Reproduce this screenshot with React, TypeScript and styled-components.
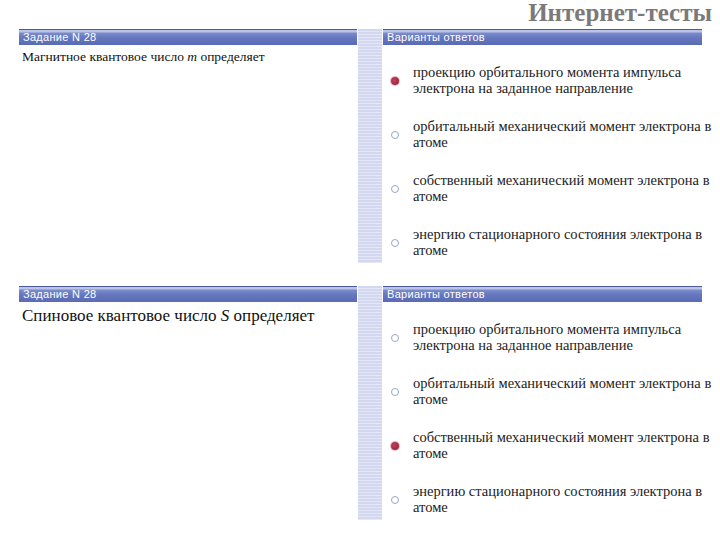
import React from "react";
import styled, { createGlobalStyle } from "styled-components";

const Global = createGlobalStyle`
  html, body { margin: 0; padding: 0; background: #fff; }
  body { width: 720px; height: 540px; overflow: hidden; }
`;

const Page = styled.div`
  width: 720px;
  height: 540px;
  display: flex;
  flex-direction: column;
`;

const TitleRow = styled.div`
  height: 28px;
  display: flex;
  justify-content: flex-end;
  align-items: flex-start;
  padding-right: 8px;
`;

const Title = styled.h1`
  margin: 0;
  font-family: "Liberation Serif", "DejaVu Serif", serif;
  font-weight: bold;
  font-size: 25px;
  line-height: 26px;
  color: #7a7a7a;
`;

const Section = styled.section<{ $gap: number }>`
  display: grid;
  grid-template-columns: 338px 24px 319px;
  column-gap: 1px;
  margin-left: 19px;
  margin-top: ${(p) => p.$gap}px;
`;

const Header = styled.div`
  height: 16px;
  box-sizing: border-box;
  border-top: 1px solid #4a5a9c;
  background: linear-gradient(
    to bottom,
    #b9c4e6 0px,
    #b9c4e6 2px,
    #7b8bcb 3px,
    #6476bd 8px,
    #5a6bb5 15px
  );
  color: #fff;
  font-family: "Liberation Sans", Arial, sans-serif;
  font-size: 11px;
  letter-spacing: 0.3px;
  line-height: 14px;
  padding-left: 4px;
  white-space: nowrap;
  overflow: hidden;
`;

const Column = styled.div`
  display: flex;
  flex-direction: column;
  min-width: 0;
`;

const Stripe = styled.div`
  background: repeating-linear-gradient(
    to bottom,
    #d3d8f0 0px,
    #d3d8f0 2px,
    #e4e7f6 2px,
    #e4e7f6 3px
  );
`;

const Question = styled.div<{ $size: number }>`
  font-family: "Liberation Serif", "Times New Roman", serif;
  font-size: ${(p) => p.$size}px;
  color: #111;
  padding: 4px 0 0 3px;
  line-height: 1.2;
`;

const Var = styled.i`
  font-family: "Liberation Serif", serif;
`;

const Options = styled.div`
  display: flex;
  flex-direction: column;
  gap: 22px;
  padding: 19px 0 5px 8px;
`;

const Option = styled.div`
  display: flex;
  align-items: center;
  gap: 14px;
`;

const Radio = styled.span<{ $checked: boolean }>`
  flex: none;
  width: 8px;
  height: 8px;
  border-radius: 50%;
  margin-top: 2px;
  box-sizing: border-box;
  ${(p) =>
    p.$checked
      ? `background: radial-gradient(circle at 40% 40%, #c2405a, #8e1a34); box-shadow: 0 0 0 1px #e9b8c2;`
      : `border: 1.5px solid #9aa6c4; background: #fff;`}
`;

const OptionText = styled.div`
  flex: none;
  font-family: "Liberation Serif", "Times New Roman", serif;
  font-size: 14.5px;
  line-height: 16px;
  color: #222;
  width: 306px;
`;

type Q = { text: React.ReactNode; size: number; checked: number; gap: number };

const options = [
  "проекцию орбитального момента импульса электрона на заданное направление",
  "орбитальный механический момент электрона в атоме",
  "собственный механический момент электрона в атоме",
  "энергию стационарного состояния электрона в атоме",
];

const questions: Q[] = [
  {
    text: (
      <>
        Магнитное квантовое число <Var>m</Var> определяет
      </>
    ),
    size: 13.5,
    checked: 0,
    gap: 1,
  },
  {
    text: (
      <>
        Спиновое квантовое число <Var>S</Var> определяет
      </>
    ),
    size: 17,
    checked: 2,
    gap: 23,
  },
];

export default function App() {
  return (
    <Page>
      <Global />
      <TitleRow>
        <Title>Интернет-тесты</Title>
      </TitleRow>
      {questions.map((q, qi) => (
        <Section key={qi} $gap={q.gap}>
          <Column>
            <Header>Задание N 28</Header>
            <Question $size={q.size}>{q.text}</Question>
          </Column>
          <Stripe />
          <Column>
            <Header>Варианты ответов</Header>
            <Options>
              {options.map((o, i) => (
                <Option key={i}>
                  <Radio $checked={i === q.checked} />
                  <OptionText>{o}</OptionText>
                </Option>
              ))}
            </Options>
          </Column>
        </Section>
      ))}
    </Page>
  );
}
